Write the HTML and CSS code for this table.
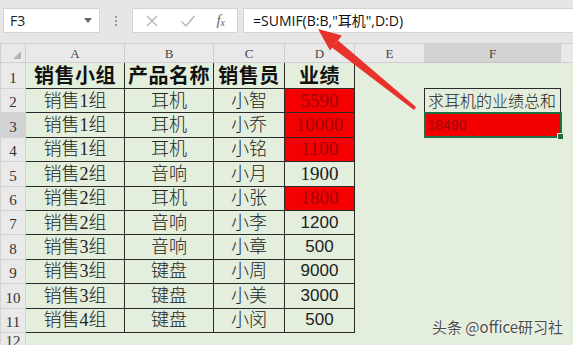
FILE: index.html
```html
<!DOCTYPE html>
<html lang="zh">
<head>
<meta charset="utf-8">
<title>SUMIF</title>
<link rel="stylesheet" href="styles.css">
</head>
<body>
<div class="app">
  <div class="toolbar">
    <div class="namebox">
      <span class="ref">F3</span>
      <svg class="dd" width="8" height="5" viewBox="0 0 8 5"><path d="M0 0H8L4 5Z" fill="#666"/></svg>
    </div>
    <div class="dots"><i></i><i></i><i></i></div>
    <div class="btns">
      <svg width="14" height="14" viewBox="0 0 14 14"><path d="M2 2L12 12M12 2L2 12" stroke="#b4b4b4" stroke-width="1.4"/></svg>
      <svg width="16" height="14" viewBox="0 0 16 14"><path d="M1.5 7.5L6 12L14.5 2" stroke="#b4b4b4" stroke-width="1.4" fill="none"/></svg>
      <span class="fx"><i>f</i><sub>x</sub></span>
    </div>
    <div class="formula">=SUMIF(B:B,"耳机",D:D)</div>
  </div>

  <table class="sheet">
    <colgroup>
      <col class="c-rn"><col class="c-a"><col class="c-b"><col class="c-c"><col class="c-d"><col class="c-e"><col class="c-f"><col class="c-g">
    </colgroup>
    <tr class="hdr">
      <th class="corner"><span class="tri"></span></th><th>A</th><th>B</th><th>C</th><th>D</th><th>E</th><th class="sel">F</th><th></th>
    </tr>
    <tr class="r1">
      <th class="rn">1</th><td class="d h">销售小组</td><td class="d h">产品名称</td><td class="d h">销售员</td><td class="d h">业绩</td><td></td><td></td><td></td>
    </tr>
    <tr class="r">
      <th class="rn">2</th><td class="d">销售1组</td><td class="d">耳机</td><td class="d">小智</td><td class="d num red">5590</td><td></td><td class="label">求耳机的业绩总和</td><td></td>
    </tr>
    <tr class="r">
      <th class="rn sel">3</th><td class="d">销售1组</td><td class="d">耳机</td><td class="d">小乔</td><td class="d num red">10000</td><td></td><td class="active"><span class="val">18490</span><span class="handle"></span></td><td></td>
    </tr>
    <tr class="r">
      <th class="rn">4</th><td class="d">销售1组</td><td class="d">耳机</td><td class="d">小铭</td><td class="d num red">1100</td><td></td><td></td><td></td>
    </tr>
    <tr class="r">
      <th class="rn">5</th><td class="d">销售2组</td><td class="d">音响</td><td class="d">小月</td><td class="d num">1900</td><td></td><td></td><td></td>
    </tr>
    <tr class="r">
      <th class="rn">6</th><td class="d">销售2组</td><td class="d">耳机</td><td class="d">小张</td><td class="d num red">1800</td><td></td><td></td><td></td>
    </tr>
    <tr class="r">
      <th class="rn">7</th><td class="d">销售2组</td><td class="d">音响</td><td class="d">小李</td><td class="d num sans">1200</td><td></td><td></td><td></td>
    </tr>
    <tr class="r">
      <th class="rn">8</th><td class="d">销售3组</td><td class="d">音响</td><td class="d">小章</td><td class="d num sans">500</td><td></td><td></td><td></td>
    </tr>
    <tr class="r">
      <th class="rn">9</th><td class="d">销售3组</td><td class="d">键盘</td><td class="d">小周</td><td class="d num sans">9000</td><td></td><td></td><td></td>
    </tr>
    <tr class="r">
      <th class="rn">10</th><td class="d">销售3组</td><td class="d">键盘</td><td class="d">小美</td><td class="d num sans">3000</td><td></td><td></td><td></td>
    </tr>
    <tr class="r">
      <th class="rn">11</th><td class="d">销售4组</td><td class="d">键盘</td><td class="d">小闵</td><td class="d num sans">500</td><td></td><td></td><td></td>
    </tr>
    <tr class="r12">
      <th class="rn">12</th><td></td><td></td><td></td><td></td><td></td><td></td><td></td>
    </tr>
  </table>

  <svg class="arrow" width="573" height="345" viewBox="0 0 573 345">
    <polygon points="416,107 414,110 332,47.5 338,40.5" fill="#e8322b"/>
    <polygon points="318,29 342,35.5 330,50.5" fill="#e8322b"/>
  </svg>

  <div class="watermark">头条 @office研习社</div>
</div>
</body>
</html>
```

FILE: styles.css
```css
html, body {
  margin: 0;
  padding: 0;
  background: #e3eedc;
  overflow: hidden;
}

.app {
  position: relative;
  width: 573px;
  height: 345px;
  overflow: hidden;
  background: #e3eedc;
}

.toolbar {
  height: 43px;
  box-sizing: border-box;
  padding: 8px 0 0 3px;
  background: #e6e6e6;
  display: flex;
  align-items: flex-start;
  font-family: "Open Sans", "Liberation Sans", "Noto Sans CJK SC", sans-serif;
}

.namebox {
  width: 97px;
  height: 25px;
  box-sizing: border-box;
  background: #fff;
  border: 1px solid #d4d4d4;
  display: flex;
  align-items: center;
  justify-content: space-between;
  padding: 0 7px 0 6px;
}

.ref {
  font-size: 14px;
  color: #222;
}

.dots {
  width: 32px;
  height: 25px;
  display: flex;
  flex-direction: column;
  align-items: center;
  justify-content: center;
  gap: 2px;
}

.dots i {
  width: 2px;
  height: 2px;
  background: #9a9a9a;
  display: block;
}

.btns {
  width: 106px;
  height: 25px;
  box-sizing: border-box;
  background: #fff;
  border: 1px solid #d4d4d4;
  display: flex;
  align-items: center;
  justify-content: space-between;
  padding: 0 12px 0 12px;
}

.fx {
  color: #666;
  font-family: "Liberation Serif", serif;
  font-size: 15px;
  line-height: 1;
}

.fx sub {
  font-size: 10px;
  font-style: italic;
  vertical-align: -1px;
}

.formula {
  margin-left: 5px;
  flex: 1;
  height: 25px;
  box-sizing: border-box;
  background: #fff;
  border: 1px solid #d4d4d4;
  border-right: none;
  padding-left: 9px;
  font-size: 14px;
  line-height: 23px;
  color: #111;
  white-space: nowrap;
}

.sheet {
  border-collapse: collapse;
  table-layout: fixed;
  width: 573px;
}

.c-rn { width: 25px; }
.c-a { width: 99px; }
.c-b { width: 89px; }
.c-c { width: 71px; }
.c-d { width: 70px; }
.c-e { width: 70px; }
.c-f { width: 136px; }
.c-g { width: 13px; }

.sheet th, .sheet td {
  padding: 0;
  overflow: hidden;
  white-space: nowrap;
}

.hdr { height: 19px; }
.hdr th {
  background: #e9e9e9;
  border: 1px solid #cfcfcf;
  font-family: "Liberation Serif", serif;
  font-weight: normal;
  font-size: 13px;
  color: #444;
  line-height: 17px;
  vertical-align: bottom;
}

.hdr th.sel {
  background: #d3d3d3;
  border-bottom: 1px solid #c4c4c4;
}

.corner {
  position: relative;
}

.tri {
  position: absolute;
  right: 4px;
  bottom: 3px;
  width: 0;
  height: 0;
  border-left: 8px solid transparent;
  border-bottom: 8px solid #b5b5b5;
}

.r1 { height: 26px; }
.r { height: 24.4px; }
.r12 { height: 14px; }

.rn {
  background: #e9e9e9;
  border: 1px solid #d3d3d3;
  font-family: "Liberation Serif", serif;
  font-weight: normal;
  font-size: 15px;
  color: #333;
  vertical-align: bottom;
  line-height: 17px;
  padding-bottom: 1px !important;
}

.rn.sel {
  background: #d3d3d3;
}

.d {
  border: 1.5px solid #2a2a2a;
  text-align: center;
  vertical-align: middle;
  font-family: "Liberation Serif", "Noto Sans CJK SC", serif;
  font-size: 18px;
  font-weight: 300;
  color: #222;
  line-height: 22px;
}

.d.h {
  font-weight: bold;
  font-size: 20px;
  letter-spacing: 0.5px;
  color: #111;
}

.num {
  font-family: "Liberation Serif", serif;
  font-size: 19px;
  font-weight: normal;
}

.num.sans {
  font-family: "Liberation Sans", sans-serif;
  font-size: 17px;
}

.red {
  background: #f50000;
  color: #9e0606;
}

.label {
  border: 1.5px solid #2a2a2a;
  font-family: "Noto Sans CJK SC", sans-serif;
  font-size: 16px;
  font-weight: 300;
  color: #1a1a1a;
  padding-left: 3px !important;
  vertical-align: middle;
  line-height: 20px;
}

.active {
  border: 2px solid #1f6f44;
  background: #f20000;
  position: relative;
  vertical-align: middle;
  padding-left: 2px !important;
  overflow: visible !important;
}

.val {
  font-family: "Liberation Sans", sans-serif;
  font-size: 14px;
  color: #9a0a0a;
}

.handle {
  position: absolute;
  right: -4px;
  bottom: -4px;
  width: 5px;
  height: 5px;
  background: #1f6f44;
  border: 1px solid #e3eedc;
}

.arrow {
  position: absolute;
  left: 0;
  top: 0;
  pointer-events: none;
}

.watermark {
  position: absolute;
  left: 432px;
  top: 316px;
  font-family: "Noto Sans CJK SC", sans-serif;
  font-size: 15px;
  color: #4a4a4a;
  text-shadow: 0 0 2px #fff, 0 0 1px #fff;
  white-space: nowrap;
}
```
